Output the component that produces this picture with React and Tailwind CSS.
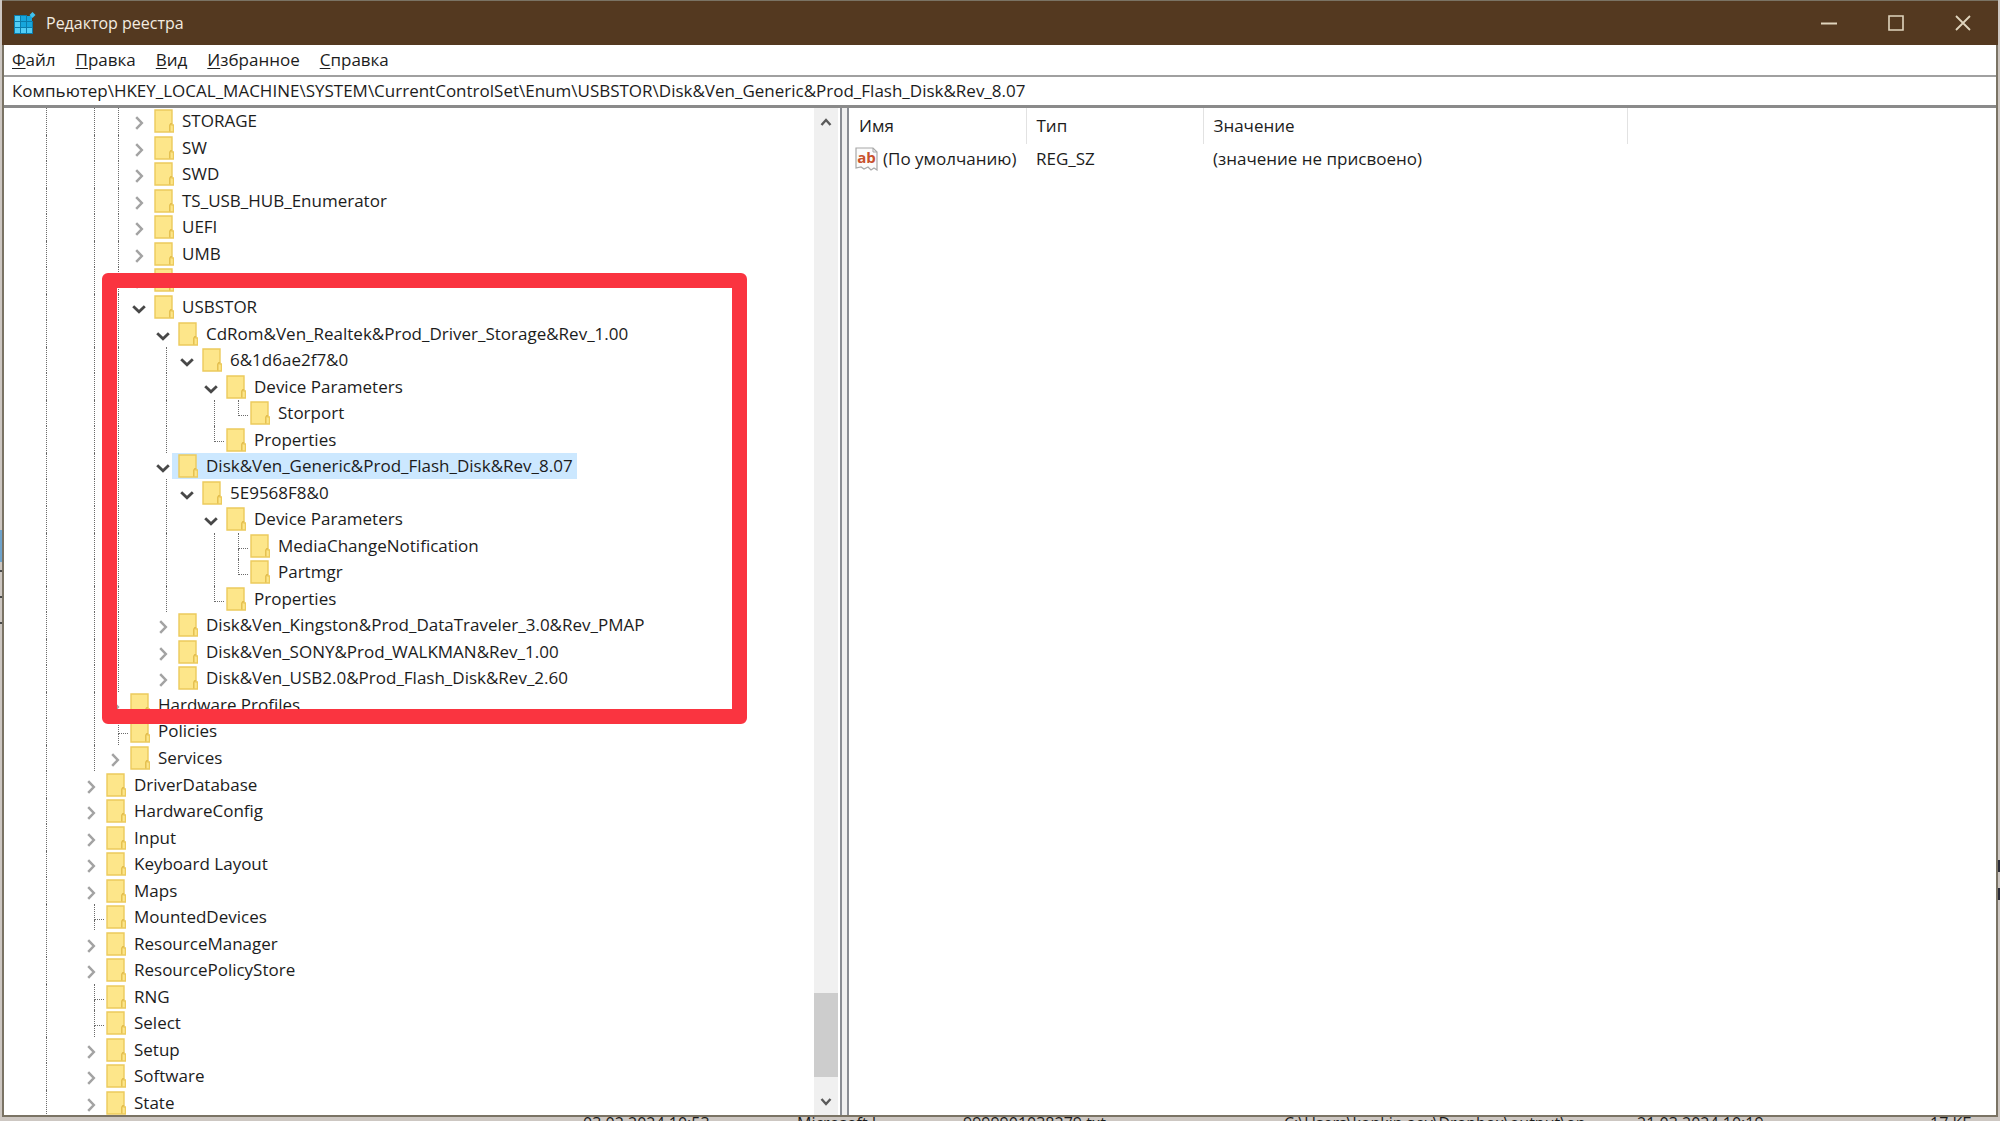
import React from "react";

const ROWS = [
  ["| ||>", "STORAGE"],
  ["| ||>", "SW"],
  ["| ||>", "SWD"],
  ["| ||>", "TS_USB_HUB_Enumerator"],
  ["| ||>", "UEFI"],
  ["| ||>", "UMB"],
  ["| ||>", "USB"],
  ["| ||v", "USBSTOR"],
  ["| || v", "CdRom&Ven_Realtek&Prod_Driver_Storage&Rev_1.00"],
  ["| || |v", "6&1d6ae2f7&0"],
  ["| || | v", "Device Parameters"],
  ["| || | |L", "Storport"],
  ["| || | L", "Properties"],
  ["| || v", "Disk&Ven_Generic&Prod_Flash_Disk&Rev_8.07", true],
  ["| || |v", "5E9568F8&0"],
  ["| || | v", "Device Parameters"],
  ["| || | |+", "MediaChangeNotification"],
  ["| || | |L", "Partmgr"],
  ["| || | L", "Properties"],
  ["| || >", "Disk&Ven_Kingston&Prod_DataTraveler_3.0&Rev_PMAP"],
  ["| || >", "Disk&Ven_SONY&Prod_WALKMAN&Rev_1.00"],
  ["| || >", "Disk&Ven_USB2.0&Prod_Flash_Disk&Rev_2.60"],
  ["| |>", "Hardware Profiles"],
  ["| |+", "Policies"],
  ["| |>", "Services"],
  ["| >", "DriverDatabase"],
  ["| >", "HardwareConfig"],
  ["| >", "Input"],
  ["| >", "Keyboard Layout"],
  ["| >", "Maps"],
  ["| +", "MountedDevices"],
  ["| >", "ResourceManager"],
  ["| >", "ResourcePolicyStore"],
  ["| +", "RNG"],
  ["| +", "Select"],
  ["| >", "Setup"],
  ["| >", "Software"],
  ["| >", "State"],
];

const MENU = ["Файл", "Правка", "Вид", "Избранное", "Справка"];

function Folder() {
  return (
    <svg viewBox="0 0 20 24" className="h-6 w-5 shrink-0" aria-hidden="true">
      <path d="M1 1h17v15h1.5v7H1z" fill="#fde68a" stroke="#ecca5c" strokeWidth="1.4" />
      <path d="M15.8 22.5v-6.2l1-1.5h1.4" fill="none" stroke="#e3bd4c" strokeWidth="1.4" />
    </svg>
  );
}

function Chevron({ open }) {
  return open ? (
    <svg viewBox="0 0 14 14" className="size-3.5" aria-hidden="true">
      <path d="M1.2 4.2 7 9.8l5.800-5.600" fill="none" stroke="#484848" strokeWidth="2.8" />
    </svg>
  ) : (
    <svg viewBox="0 0 14 14" className="size-3.5" aria-hidden="true">
      <path d="M4.200 1.200 9.800 7 4.200 12.800" fill="none" stroke="#a3a3a3" strokeWidth="2.500" />
    </svg>
  );
}

function Guide({ kind }) {
  if (kind === " ") return <span className="w-6 shrink-0" />;
  if (kind === "|")
    return (
      <span className="flex w-6 shrink-0 justify-center self-stretch">
        <span className="border-l border-dotted border-[#6b6b6b]" />
      </span>
    );
  if (kind === "+" || kind === "L")
    return (
      <span className="grid w-6 shrink-0 grid-cols-[12px_10px] grid-rows-[16px_1fr] self-stretch">
        <span />
        <span className="border-b border-l border-dotted border-[#6b6b6b]" />
        <span />
        {kind === "+" && <span className="border-l border-dotted border-[#6b6b6b]" />}
      </span>
    );
  return (
    <button
      aria-label={kind === "v" ? "Свернуть" : "Развернуть"}
      className="flex w-6 shrink-0 items-center justify-center self-stretch pt-1 pr-1.5"
    >
      <Chevron open={kind === "v"} />
    </button>
  );
}

function TreeRow({ guides, label, selected }) {
  return (
    <li className="flex min-h-0 flex-1 items-center">
      {guides.split("").map((g, i) => (
        <Guide key={i} kind={g} />
      ))}
      <button
        className={
          "-ml-1.5 flex items-center self-stretch gap-2 pr-1 pl-1.5 " + (selected ? "bg-[#cce8ff]" : "")
        }
      >
        <Folder />
        <span className="whitespace-nowrap">{label}</span>
      </button>
    </li>
  );
}

function RegeditIcon() {
  const cells = [];
  for (let r = 0; r < 3; r++) for (let c = 0; c < 3; c++) cells.push([r, c]);
  return (
    <svg viewBox="0 0 22 22" className="size-[22px]" aria-hidden="true">
      <path d="M0 3h13v6h6v13H0z" fill="#0b7cab" />
      {cells.map(([r, c]) => (
        <rect
          key={r + "-" + c}
          x={1 + c * 6}
          y={4 + r * 6}
          width="5"
          height="5"
          fill={c === 0 || r === 2 ? "#52cdf5" : "#17a6dc"}
        />
      ))}
      <path d="m18.500 0 3 3-3 3-3-3z" fill="#3fc1ee" />
    </svg>
  );
}

function StringIcon() {
  return (
    <svg viewBox="0 0 24 24" className="size-6 shrink-0" aria-hidden="true">
      <path
        d="M1 1h17l4 4v18l-3-2-3 2-3-3-4 2-3-2-5 1z"
        fill="#fbfbfb"
        stroke="#a8a8a8"
        strokeWidth="1.200"
      />
      <path d="M18 1v4h4" fill="none" stroke="#a8a8a8" />
      <text x="11.500" y="15.500" textAnchor="middle" fontSize="15" fontWeight="700" fill="#c8512d" fontFamily="Open Sans, sans-serif">
        ab
      </text>
    </svg>
  );
}

export default function App() {
  return (
    <div className="flex h-screen flex-col overflow-hidden bg-[#cdc7c2] font-['Open_Sans','Noto_Sans',sans-serif] text-[17px] leading-5 text-[#1c1c1c]">
      <div className="flex min-h-0 flex-1">
        <div className="flex w-0.5 shrink-0 flex-col">
          <div className="h-[530px]" />
          <div className="h-8 bg-[#6fa3cb]" />
          <div className="mt-2 h-0.5 bg-[#4a4a4a]" />
          <div className="mt-6 h-0.5 bg-[#4a4a4a]" />
          <div className="mt-6 h-0.5 bg-[#4a4a4a]" />
        </div>
        <main className="relative flex min-h-0 min-w-0 flex-1 flex-col border-x-2 border-t border-b-2 border-[#7a7364] bg-white">
          <header className="-mx-0.5 flex h-11 shrink-0 items-center bg-[#543920] pr-0.5 pl-3 text-[#f3ece0]">
            <RegeditIcon />
            <h1 className="flex-1 pl-2.5 text-base">Редактор реестра</h1>
            <button aria-label="Свернуть окно" className="flex h-full w-[67px] items-center justify-center">
              <svg viewBox="0 0 16 16" className="size-4"><path d="M0 8.500h16" stroke="#e0d5bd" strokeWidth="2" /></svg>
            </button>
            <button aria-label="Развернуть окно" className="flex h-full w-[67px] items-center justify-center">
              <svg viewBox="0 0 16 16" className="size-4"><path d="M1 1h14v14H1z" fill="none" stroke="#e0d5bd" strokeWidth="1.600" /></svg>
            </button>
            <button aria-label="Закрыть" className="flex h-full w-[67px] items-center justify-center">
              <svg viewBox="0 0 16 16" className="size-4"><path d="m1 1 14 14M15 1 1 15" stroke="#e0d5bd" strokeWidth="1.800" /></svg>
            </button>
          </header>
          <nav className="flex h-[30px] shrink-0 items-center gap-5 pl-2">
            {MENU.map((m) => (
              <button key={m}>
                <span className="underline underline-offset-2">{m[0]}</span>
                {m.slice(1)}
              </button>
            ))}
          </nav>
          <input
            aria-label="Адрес"
            className="h-[33px] w-full shrink-0 border-t-2 border-b-3 border-t-[#a0a0a0] border-b-[#8a8a8a] px-2 pb-0.5 outline-none"
            defaultValue="Компьютер\HKEY_LOCAL_MACHINE\SYSTEM\CurrentControlSet\Enum\USBSTOR\Disk&Ven_Generic&Prod_Flash_Disk&Rev_8.07"
          />
          <div className="flex min-h-0 flex-1 overflow-hidden">
            <section className="flex w-[838px] shrink-0 border-r-2 border-[#8a8d94] pr-0.5">
              <ul className="-mb-px flex min-w-0 flex-1 flex-col pl-[30px]">
                {ROWS.map(([guides, label, selected], i) => (
                  <TreeRow key={i} guides={guides} label={label} selected={selected} />
                ))}
              </ul>
              <div className="flex w-6 flex-col items-center bg-[#f0f0f0]">
                <button aria-label="Вверх" className="flex h-7 w-full items-center justify-center">
                  <svg viewBox="0 0 12 12" className="size-3"><path d="m1.500 9 4.500-5 4.500 5" fill="none" stroke="#5a5a5a" strokeWidth="2.400" /></svg>
                </button>
                <div className="flex-1" />
                <div className="h-[84px] w-full bg-[#cdcdcd]" />
                <button aria-label="Вниз" className="flex h-[38px] w-full items-center justify-center pt-3">
                  <svg viewBox="0 0 12 12" className="size-3"><path d="m1.500 3 4.500 5 4.500-5" fill="none" stroke="#5a5a5a" strokeWidth="2.400" /></svg>
                </button>
              </div>
            </section>
            <div className="w-[5px] shrink-0 bg-[#f0f0f0]" />
            <section className="min-w-0 flex-1 border-l-2 border-[#8a8d94]">
              <table className="w-[778px] table-fixed border-collapse text-left">
                <colgroup>
                  <col className="w-[177px]" />
                  <col className="w-[177px]" />
                  <col className="w-[424px]" />
                </colgroup>
                <thead>
                  <tr className="h-9">
                    {["Имя", "Тип", "Значение"].map((h) => (
                      <th key={h} className="border-r border-[#e2e2e2] pl-2.5 font-normal">{h}</th>
                    ))}
                  </tr>
                </thead>
                <tbody>
                  <tr className="h-[30px] whitespace-nowrap">
                    <td className="pl-1.5">
                      <span className="flex items-center gap-1">
                        <StringIcon />
                        (По умолчанию)
                      </span>
                    </td>
                    <td className="pl-2.5">REG_SZ</td>
                    <td className="pl-2.5">(значение не присвоено)</td>
                  </tr>
                </tbody>
              </table>
            </section>
          </div>
          <div className="pointer-events-none absolute top-[272px] left-[98px] h-[451px] w-[645px] rounded-md border-[15px] border-[#fa3440]" />
        </main>
        <div className="flex w-0.5 shrink-0 flex-col">
          <div className="h-[860px]" />
          <div className="h-3 bg-[#2c2c38]" />
          <div className="mt-4 h-3 bg-[#2c2c38]" />
        </div>
      </div>
      <footer className="grid h-1 shrink-0 grid-cols-[214px_166px_321px_353px_293px_1fr] overflow-hidden pl-[583px] text-base leading-3 whitespace-nowrap">
        <span>03.02.2024 10:53</span>
        <span>Microsoft I</span>
        <span>9999901038279.txt</span>
        <span>C:\Users\konkin.aev\Dropbox\output\on</span>
        <span>21.03.2024 10:19</span>
        <span>17 КБ</span>
      </footer>
    </div>
  );
}
